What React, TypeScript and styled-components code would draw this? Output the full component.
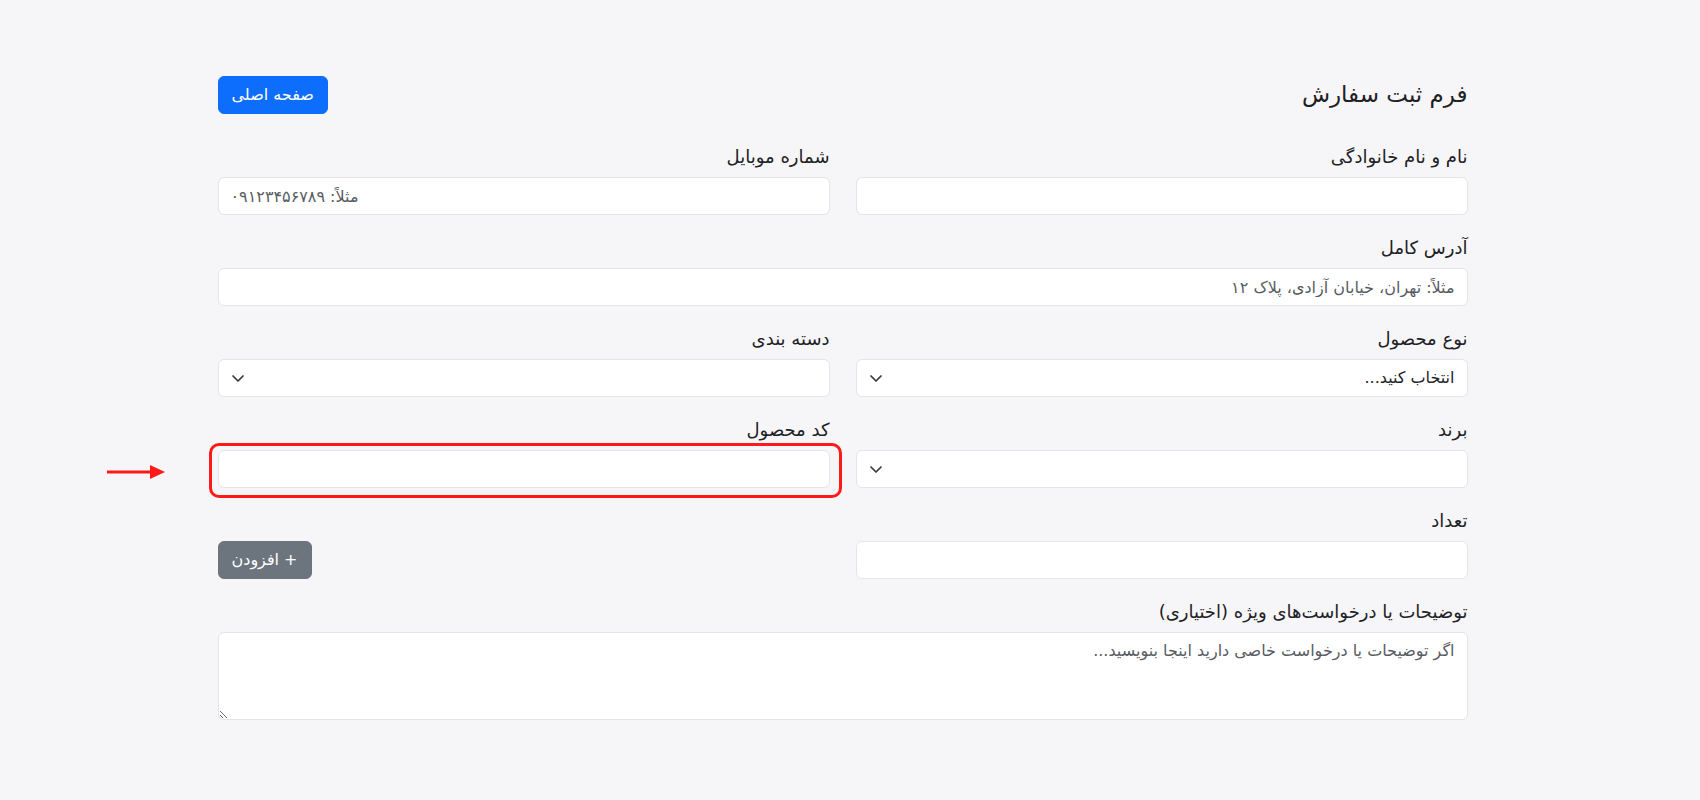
import React from "react";
import styled, { createGlobalStyle } from "styled-components";

const GlobalStyle = createGlobalStyle`
  html, body {
    margin: 0;
    padding: 0;
    background: #f6f6f8;
  }
  body {
    font-family: "DejaVu Sans", "Noto Sans", sans-serif;
    color: #212529;
    direction: rtl;
  }
  * { box-sizing: border-box; }
`;

const Page = styled.div`
  padding: 76px 15px 80px 0;
`;

const Container = styled.div`
  width: 1250px;
  margin: 0 auto;
`;

const Header = styled.div`
  display: flex;
  justify-content: space-between;
  align-items: center;
  height: 38px;
`;

const Title = styled.h4`
  margin: 0;
  font-size: 23px;
  font-weight: 400;
  line-height: 1.2;
  color: #1e2125;
`;

const Button = styled.button<{ $variant: "primary" | "secondary" }>`
  font-family: inherit;
  font-size: 16px;
  line-height: 24px;
  padding: 6px 13px;
  border-radius: 6px;
  border: 1px solid ${(p) => (p.$variant === "primary" ? "#0d6efd" : "#6c757d")};
  background: ${(p) => (p.$variant === "primary" ? "#0d6efd" : "#6c757d")};
  color: #fff;
  cursor: pointer;
  height: 38px;
  white-space: nowrap;
`;

const Form = styled.form`
  display: grid;
  grid-template-columns: 1fr 1fr;
  column-gap: 26px;
  row-gap: 21px;
  margin-top: 31px;
`;

const Field = styled.div<{ $full?: boolean; $end?: boolean }>`
  display: flex;
  flex-direction: column;
  grid-column: ${(p) => (p.$full ? "1 / -1" : "auto")};
  justify-content: ${(p) => (p.$end ? "flex-end" : "flex-start")};
  align-items: ${(p) => (p.$end ? "flex-end" : "stretch")};
`;

const Label = styled.label`
  display: block;
  font-size: 18px;
  line-height: 24px;
  margin-bottom: 8px;
  color: #1e2125;
`;

const inputBase = `
  display: block;
  width: 100%;
  height: 38px;
  padding: 6px 12px;
  font-family: inherit;
  font-size: 16px;
  line-height: 24px;
  color: #212529;
  background-color: #fff;
  border: 1px solid #e3e5e9;
  border-radius: 6px;
  outline: none;
  &::placeholder {
    color: #575c62;
  }
`;

const Input = styled.input<{ $ltr?: boolean }>`
  ${inputBase}
  direction: ${(p) => (p.$ltr ? "ltr" : "rtl")};
`;

const SelectWrap = styled.div`
  position: relative;
`;

const Select = styled.select`
  ${inputBase}
  appearance: none;
  -webkit-appearance: none;
  padding-left: 36px;
`;

const Chevron = styled.svg`
  position: absolute;
  left: 12px;
  top: 12px;
  width: 16px;
  height: 14px;
  pointer-events: none;
`;

const TextArea = styled.textarea`
  ${inputBase}
  height: 88px;
  resize: vertical;
`;

const Highlight = styled.div`
  position: relative;
`;

const HighlightRing = styled.div`
  position: absolute;
  top: -7px;
  bottom: -10px;
  left: -9px;
  right: -12px;
  border: 3px solid #ff1a1a;
  border-radius: 10px;
  pointer-events: none;
`;

const Arrow = styled.svg`
  position: absolute;
  left: -111px;
  top: 14px;
  width: 60px;
  height: 16px;
  pointer-events: none;
`;

function ChevronIcon() {
  return (
    <Chevron viewBox="0 0 16 14" aria-hidden="true">
      <path
        fill="none"
        stroke="#343a40"
        strokeLinecap="round"
        strokeLinejoin="round"
        strokeWidth="1.7"
        d="m3 5 5 5 5-5"
      />
    </Chevron>
  );
}

function SelectField({ children }: { children?: React.ReactNode }) {
  return (
    <SelectWrap>
      <Select defaultValue="">{children}</Select>
      <ChevronIcon />
    </SelectWrap>
  );
}

export default function App() {
  return (
    <>
      <GlobalStyle />
      <Page>
        <Container>
          <Header>
            <Title>فرم ثبت سفارش</Title>
            <Button $variant="primary" type="button">
              صفحه اصلی
            </Button>
          </Header>
          <Form onSubmit={(e) => e.preventDefault()}>
            <Field>
              <Label>نام و نام خانوادگی</Label>
              <Input type="text" />
            </Field>
            <Field>
              <Label>شماره موبایل</Label>
              <Input $ltr type="text" placeholder="مثلاً: ۰۹۱۲۳۴۵۶۷۸۹" />
            </Field>
            <Field $full>
              <Label>آدرس کامل</Label>
              <Input type="text" placeholder="مثلاً: تهران، خیابان آزادی، پلاک ۱۲" />
            </Field>
            <Field>
              <Label>نوع محصول</Label>
              <SelectField>
                <option value="">انتخاب کنید...</option>
              </SelectField>
            </Field>
            <Field>
              <Label>دسته بندی</Label>
              <SelectField />
            </Field>
            <Field>
              <Label>برند</Label>
              <SelectField />
            </Field>
            <Field>
              <Label>کد محصول</Label>
              <Highlight>
                <Input type="text" />
                <HighlightRing />
                <Arrow viewBox="0 0 60 16" aria-hidden="true">
                  <rect x="0" y="6.5" width="46" height="3" fill="#ff1a1a" />
                  <polygon points="43,1 58,8 43,15" fill="#ff1a1a" />
                </Arrow>
              </Highlight>
            </Field>
            <Field>
              <Label>تعداد</Label>
              <Input type="number" />
            </Field>
            <Field $end>
              <Button $variant="secondary" type="button">
                + افزودن
              </Button>
            </Field>
            <Field $full>
              <Label>توضیحات یا درخواست‌های ویژه (اختیاری)</Label>
              <TextArea placeholder="اگر توضیحات یا درخواست خاصی دارید اینجا بنویسید..." />
            </Field>
          </Form>
        </Container>
      </Page>
    </>
  );
}
